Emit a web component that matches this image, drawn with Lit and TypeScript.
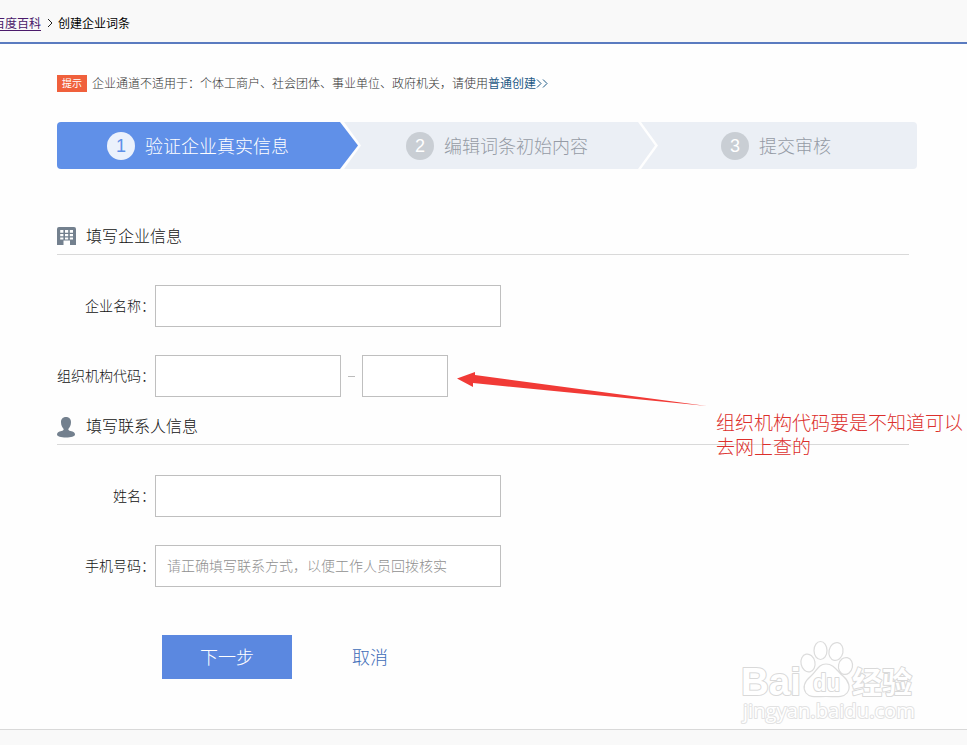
import { LitElement, html, css, svg } from "lit";
import { customElement, property } from "lit/decorators.js";

@customElement("section-title")
class SectionTitle extends LitElement {
  @property() icon = "building";
  @property() label = "";

  static styles = css`
    :host {
      display: flex;
      align-items: flex-start;
      box-sizing: border-box;
      width: 852px;
      height: 36px;
      border-bottom: 1px solid #d9d9d9;
      font-size: 16px;
      line-height: 32px;
      color: #111;
    }
    .icon {
      display: block;
      flex: none;
      width: 20px;
      height: 23px;
      margin: 6px 9px 0 0;
    }
  `;

  render() {
    const building = svg`
      <path fill="#73808e" fill-rule="evenodd" d="M2 2H17Q19 2 19 4V20H13V15.5H6.500V20H0V4Q0 2 2 2ZM3.200 5H6.400V7.700H3.200ZM8 5H11.200V7.700H8ZM12.800 5H16V7.700H12.800ZM3.200 9H6.400V11.200H3.200ZM8 9H11.200V11.200H8ZM12.800 9H16V11.200H12.800ZM3.200 12.500H6.400V14.500H3.200ZM8 12.500H11.200V14.500H8ZM12.800 12.500H16V14.500H12.800Z"/>`;
    const person = svg`
      <path fill="#73808e" d="M9 2C12.300 2 14 4.200 14 7.200C14 10.300 12.600 12.600 11.300 14C11.300 15.200 12 15.700 13.500 16C16.500 16.700 18 17.600 18 19.500C18 21.500 14 22.500 9 22.500S0 21.500 0 19.500C0 17.600 1.500 16.700 4.500 16C6 15.700 6.700 15.200 6.700 14C5.400 12.600 4 10.300 4 7.200C4 4.200 5.700 2 9 2Z"/>`;
    return html`
      <svg class="icon" viewBox="0 0 20 23">
        ${this.icon === "person" ? person : building}
      </svg>
      <span>${this.label}</span>
    `;
  }
}

@customElement("baidu-watermark")
class BaiduWatermark extends LitElement {
  static styles = css`
    :host {
      display: block;
      width: 180px;
      height: 90px;
    }
    .mark {
      display: block;
      overflow: visible;
    }
    .outline {
      fill: #fff;
      stroke: #d9d9d9;
      stroke-width: 2px;
      paint-order: stroke;
      stroke-linejoin: round;
    }
    .shape {
      fill: #fff;
      stroke: #dcdcdc;
      stroke-width: 1.2px;
    }
    .latin {
      font-family: "Liberation Sans", sans-serif;
      font-weight: 700;
    }
    .cjk {
      font-family: "Noto Sans CJK SC", sans-serif;
      font-weight: 700;
    }
    .url {
      font-family: "Open Sans", sans-serif;
      font-weight: 400;
      stroke: #e2e2e2;
    }
  `;

  render() {
    return html`
      <svg class="mark" width="180" height="90" viewBox="0 0 180 90">
        <text class="outline latin" x="1" y="65" font-size="38" textLength="60" lengthAdjust="spacingAndGlyphs">Bai</text>
        <ellipse class="shape" cx="80.500" cy="20.500" rx="6.500" ry="9" />
        <ellipse class="shape" cx="96" cy="21.500" rx="7" ry="9" transform="rotate(12 96 21.500)" />
        <ellipse class="shape" cx="68" cy="33" rx="7" ry="9" transform="rotate(-12 68 33)" />
        <ellipse class="shape" cx="105.500" cy="36" rx="7" ry="8.500" transform="rotate(12 105.500 36)" />
        <path class="shape" d="M86 34C94 34 97 41 103 46C109 51 111 58 107 63C103 68 96 66.500 86 66.500S70 68 66 63C62 57 65 51 71 46C77 41 78 34 86 34Z" />
        <text class="outline latin" x="73" y="61" font-size="24" textLength="27" lengthAdjust="spacingAndGlyphs">du</text>
        <text class="outline cjk" x="112" y="63" font-size="30" textLength="60" lengthAdjust="spacingAndGlyphs">经验</text>
        <text class="outline url" x="3" y="87.500" font-size="20" textLength="172" lengthAdjust="spacingAndGlyphs">jingyan.baidu.com</text>
      </svg>
    `;
  }
}

@customElement("app-root")
class AppRoot extends LitElement {
  static styles = css`
    :host {
      display: flex;
      flex-direction: column;
      position: relative;
      box-sizing: border-box;
      width: 967px;
      height: 745px;
      overflow: hidden;
      background: #fefefe;
      font-family: "Noto Sans CJK SC", sans-serif;
      font-weight: 300;
      color: #111;
    }
    .crumbs {
      flex: none;
      box-sizing: border-box;
      height: 44px;
      border-bottom: 2px solid #5a7bc0;
      background: #f9f9f9;
      display: flex;
      align-items: center;
      padding-top: 3px;
      font-size: 12px;
      font-weight: 400;
      line-height: 18px;
      color: #000;
      white-space: nowrap;
    }
    .home {
      margin-left: -7px;
      color: #4b1a6b;
      text-decoration: underline;
      text-underline-offset: 2px;
    }
    .sep {
      width: 6px;
      height: 10px;
      margin: 0 5px 0 6px;
      fill: none;
      stroke: #222;
    }
    .content {
      flex: none;
      box-sizing: border-box;
      height: 685px;
      padding: 29px 50px 0 57px;
    }
    .tip {
      display: flex;
      align-items: center;
      height: 20px;
      font-size: 12px;
      line-height: 20px;
      color: #333;
      white-space: nowrap;
    }
    .badge {
      width: 30px;
      height: 17px;
      margin-right: 5px;
      background: #f0603c;
      color: #fff;
      font-size: 10px;
      font-weight: 400;
      line-height: 16px;
      text-align: center;
    }
    .link {
      color: #1f5a86;
      font-weight: 400;
    }
    .more {
      width: 12px;
      height: 9px;
      fill: none;
      stroke: #1f5a86;
    }
    .steps {
      display: flex;
      height: 47px;
      margin-top: 29px;
      border-radius: 4px;
      overflow: hidden;
    }
    .step {
      display: flex;
      align-items: center;
      box-sizing: border-box;
      flex: none;
      gap: 10px;
      background: #ebeff5;
      color: #959ba5;
      font-size: 18px;
      line-height: 47px;
      white-space: nowrap;
    }
    .first {
      width: 301px;
      padding-left: 50px;
      background: #6090e8;
      color: #fff;
      clip-path: polygon(0 0, 283px 0, 100% 50%, 283px 100%, 0 100%);
    }
    .second {
      width: 311px;
      margin-left: -14px;
      padding-left: 62px;
      clip-path: polygon(0 0, 294px 0, 100% 50%, 294px 100%, 0 100%, 17px 50%);
    }
    .third {
      width: 276px;
      margin-left: -14px;
      padding-left: 80px;
      clip-path: polygon(0 0, 100% 0, 100% 100%, 0 100%, 17px 50%);
    }
    .num {
      width: 28px;
      height: 28px;
      border-radius: 50%;
      background: #c9ced4;
      color: #fff;
      font: 400 18px/28px "Liberation Sans", sans-serif;
      text-align: center;
    }
    .first .num {
      background: #ebf1fc;
      color: #6090e8;
    }
    .company {
      margin-top: 50px;
    }
    .contact {
      margin-top: 12px;
    }
    .fields {
      display: grid;
      gap: 28px;
      margin-top: 30px;
    }
    .row {
      display: flex;
      align-items: center;
      height: 42px;
      font-size: 14px;
    }
    .label {
      width: 98px;
      padding-bottom: 2px;
      text-align: right;
      white-space: nowrap;
    }
    .input {
      box-sizing: border-box;
      width: 346px;
      height: 42px;
      border: 1px solid #bfbfbf;
      border-radius: 0;
      background: #fff;
      padding: 0 11px 2px;
      font: inherit;
      outline: none;
    }
    .input::placeholder {
      color: #909090;
    }
    .code {
      width: 186px;
    }
    .check {
      width: 86px;
    }
    .dash {
      width: 7px;
      height: 1px;
      margin: 0 7px;
      background: #bbb;
    }
    .actions {
      display: flex;
      align-items: center;
      gap: 60px;
      margin: 48px 0 0 105px;
      font-size: 18px;
    }
    .next {
      width: 130px;
      height: 44px;
      padding: 0 0 2px;
      border: 0;
      background: #5b88e0;
      color: #fff;
      font: inherit;
    }
    .cancel {
      padding-bottom: 2px;
      color: #3d6cb8;
    }
    .footer {
      flex: 1;
      border-top: 1px solid #d9d9d9;
      background: #f9f9f9;
    }
    .arrow {
      position: absolute;
      left: 456px;
      top: 370px;
      width: 252px;
      height: 38px;
    }
    .note {
      position: absolute;
      left: 716px;
      top: 410px;
      width: 251px;
      font-size: 19px;
      line-height: 24px;
      color: #dc2f2c;
      white-space: nowrap;
    }
    .watermark {
      position: absolute;
      left: 740px;
      top: 630px;
    }
  `;

  render() {
    return html`
      <nav class="crumbs">
        <a class="home">百度百科</a>
        <svg class="sep" viewBox="0 0 6 10"><path d="M1 1L5 5L1 9" /></svg>
        <span>创建企业词条</span>
      </nav>
      <main class="content">
        <div class="tip">
          <span class="badge">提示</span>
          <span>企业通道不适用于：个体工商户、社会团体、事业单位、政府机关，请使用</span>
          <a class="link">普通创建</a>
          <svg class="more" viewBox="0 0 12 9"><path d="M1 .5L5 4.500L1 8.500M7 .5L11 4.500L7 8.500" /></svg>
        </div>
        <div class="steps">
          <div class="step first"><span class="num">1</span><span>验证企业真实信息</span></div>
          <div class="step second"><span class="num">2</span><span>编辑词条初始内容</span></div>
          <div class="step third"><span class="num">3</span><span>提交审核</span></div>
        </div>
        <section-title class="company" icon="building" label="填写企业信息"></section-title>
        <div class="fields">
          <div class="row"><span class="label">企业名称：</span><input class="input" /></div>
          <div class="row">
            <span class="label">组织机构代码：</span><input class="input code" />
            <span class="dash"></span><input class="input check" />
          </div>
        </div>
        <section-title class="contact" icon="person" label="填写联系人信息"></section-title>
        <div class="fields">
          <div class="row"><span class="label">姓名：</span><input class="input" /></div>
          <div class="row">
            <span class="label">手机号码：</span>
            <input class="input" placeholder="请正确填写联系方式，以便工作人员回拨核实" />
          </div>
        </div>
        <div class="actions">
          <button class="next">下一步</button>
          <a class="cancel">取消</a>
        </div>
      </main>
      <footer class="footer"></footer>
      <svg class="arrow" viewBox="0 0 252 38">
        <path fill="#f13a36" d="M1 8.500L19 2V5L251 36L17 13V17Z" />
      </svg>
      <div class="note">组织机构代码要是不知道可以<br />去网上查的</div>
      <baidu-watermark class="watermark"></baidu-watermark>
    `;
  }
}
